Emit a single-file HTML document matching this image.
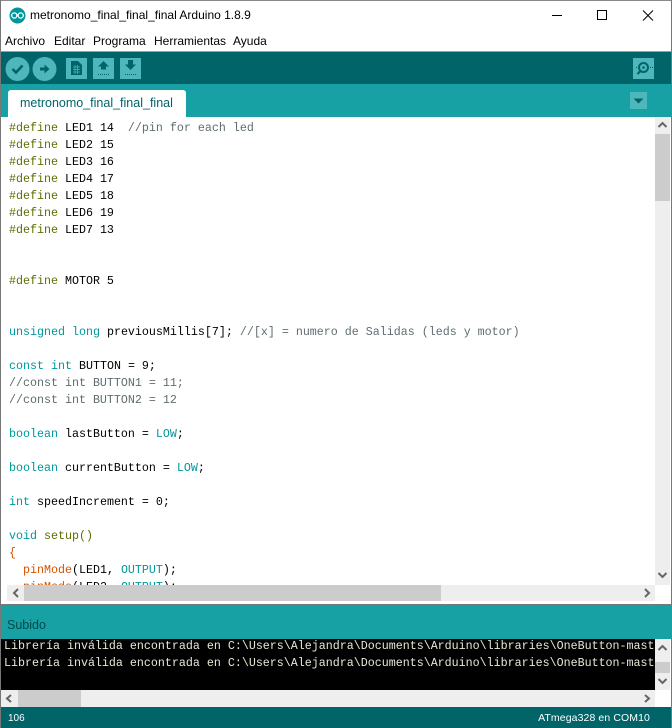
<!DOCTYPE html>
<html><head><meta charset="utf-8"><style>
html,body{margin:0;padding:0;background:#fff}
#w{position:relative;width:672px;height:728px;overflow:hidden;background:#fff;font-family:"Liberation Sans",sans-serif}
#w div,#w span.a,#w svg{position:absolute}
.m{top:34px;font-size:12px;line-height:14px;color:#000;white-space:nowrap}
pre{margin:0;font-family:"Liberation Mono",monospace;font-size:11.667px;line-height:17px;white-space:pre}
.d{color:#5e6d03}.c{color:#5f6d70}.k{color:#00979c}.f{color:#d35400}
.b{background:#4db7bb}
</style></head><body><div id="w">
<div style="left:0;top:0;width:672px;height:1px;background:#8a8a8a"></div>
<svg style="left:8.500px;top:6.500px" width="17" height="17" viewBox="0 0 17 17"><circle cx="8.500" cy="8.500" r="8" fill="#00979c"/><circle cx="5.300" cy="8.500" r="2.600" fill="none" stroke="#fff" stroke-width="1.300"/><circle cx="11.700" cy="8.500" r="2.600" fill="none" stroke="#fff" stroke-width="1.300"/></svg>
<div style="left:30px;top:8px;font-size:12px;line-height:15px;white-space:nowrap;color:#000">metronomo_final_final_final Arduino 1.8.9</div>
<svg style="left:550px;top:8px" width="112" height="16" viewBox="0 0 112 16" fill="none" stroke="#000"><path d="M2 7.500H12"/><rect x="47.500" y="2.500" width="9" height="9"/><path d="M93 2.500L103 12.500M103 2.500L93 12.500" /></svg>
<div class="m" style="left:5px">Archivo</div><div class="m" style="left:54px">Editar</div><div class="m" style="left:93px">Programa</div><div class="m" style="left:154px">Herramientas</div><div class="m" style="left:233px">Ayuda</div>
<div style="left:0;top:51px;width:672px;height:1px;background:#a0a0a0"></div>
<div style="left:0;top:52px;width:672px;height:32px;background:#006468"></div>
<div style="left:0;top:84px;width:672px;height:33px;background:#17a1a5"></div>
<svg style="left:0;top:52px" width="672" height="32" viewBox="0 0 672 32">
<circle cx="17.500" cy="17" r="12" fill="#4db7bb"/><path d="M12.500 17L16 20.500L22.500 13.500" fill="none" stroke="#006468" stroke-width="2.600"/>
<circle cx="44.500" cy="17" r="12" fill="#4db7bb"/><path d="M40 15.500H44.500V12.500L49.500 17L44.500 21.500V18.500H40Z" fill="#006468"/>
<rect x="66" y="6" width="21" height="21" fill="#4db7bb"/><path d="M71 9H78L82 13V23H71Z" fill="#006468"/><path d="M73 15h7M73 17.500h7M73 20h7M75 13v9M77.500 13v9" stroke="#4db7bb" stroke-width=".7"/>
<rect x="93" y="6" width="21" height="21" fill="#4db7bb"/><path d="M103.500 9L109 14.500H106V17.500H101V14.500H98Z" fill="#006468"/><path d="M98 22.500H109" stroke="#006468" stroke-dasharray="1 1"/>
<rect x="120" y="6" width="21" height="21" fill="#4db7bb"/><path d="M128 8H133V12.500H136L130.500 18L125 12.500H128Z" fill="#006468"/><path d="M125 22.500H136" stroke="#006468" stroke-dasharray="1 1"/>
<rect x="633" y="6" width="21" height="21" fill="#4db7bb"/><circle cx="643.500" cy="15.500" r="4.500" fill="none" stroke="#006468" stroke-width="2"/><circle cx="643.500" cy="15.500" r="1.300" fill="#006468"/><path d="M640.500 19L637.500 22" stroke="#006468" stroke-width="2.200"/><path d="M636 15.500h1M650 15.500h1M652 15.500h1" stroke="#006468"/>
</svg>
<div style="left:8px;top:90px;width:178px;height:27px;background:#fff;border-radius:3px 3px 0 0"></div>
<div style="left:20px;top:96px;font-size:12.500px;line-height:14px;color:#006468;white-space:nowrap">metronomo_final_final_final</div>
<svg style="left:630px;top:92px" width="17" height="17"><rect width="17" height="17" fill="#4db7bb"/><path d="M3.500 6.500H13.500L8.500 11.500Z" fill="#006468"/></svg>
<div style="left:0;top:117px;width:655px;height:468px;overflow:hidden;background:#fff"><pre style="position:absolute;left:9px;top:3px;color:#000"><span class="d">#define</span> LED1 14  <span class="c">//pin for each led</span>
<span class="d">#define</span> LED2 15
<span class="d">#define</span> LED3 16
<span class="d">#define</span> LED4 17
<span class="d">#define</span> LED5 18
<span class="d">#define</span> LED6 19
<span class="d">#define</span> LED7 13


<span class="d">#define</span> MOTOR 5


<span class="k">unsigned</span> <span class="k">long</span> previousMillis[7]; <span class="c">//[x] = numero de Salidas (leds y motor)</span>

<span class="k">const</span> <span class="k">int</span> BUTTON = 9;
<span class="c">//const int BUTTON1 = 11;</span>
<span class="c">//const int BUTTON2 = 12</span>

<span class="k">boolean</span> lastButton = <span class="k">LOW</span>;

<span class="k">boolean</span> currentButton = <span class="k">LOW</span>;

<span class="k">int</span> speedIncrement = 0;

<span class="k">void</span> <span class="d">setup()</span>
<span class="f">{</span>
  <span class="f">pinMode</span>(LED1, <span class="k">OUTPUT</span>);
  <span class="f">pinMode</span>(LED2, <span class="k">OUTPUT</span>);</pre></div>
<div style="left:655px;top:117px;width:15px;height:468px;background:#eee"></div>
<div style="left:655px;top:134px;width:15px;height:67px;background:#ccc"></div>
<div style="left:7px;top:585px;width:648px;height:16px;background:#eee"></div>
<div style="left:24px;top:585px;width:417px;height:16px;background:#ccc"></div>
<div style="left:0;top:604px;width:672px;height:1px;background:#777"></div>
<div style="left:0;top:605px;width:672px;height:34px;background:#17a1a5"></div>
<div style="left:7px;top:618px;font-size:12.500px;line-height:14px;color:#00484b">Subido</div>
<div style="left:0;top:639px;width:655px;height:51px;background:#000;overflow:hidden"><pre style="position:absolute;left:4px;top:-1px;color:#e8e8d8">Librería inválida encontrada en C:\Users\Alejandra\Documents\Arduino\libraries\OneButton-master
Librería inválida encontrada en C:\Users\Alejandra\Documents\Arduino\libraries\OneButton-master</pre></div>
<div style="left:655px;top:639px;width:15px;height:51px;background:#eee"></div>
<div style="left:655px;top:662px;width:15px;height:11px;background:#ccc"></div>
<div style="left:0;top:690px;width:655px;height:17px;background:#eee"></div>
<div style="left:655px;top:690px;width:17px;height:17px;background:#fff"></div>
<div style="left:18px;top:690px;width:63px;height:17px;background:#ccc"></div>
<svg style="left:0;top:0" width="672" height="728" fill="none" stroke="#666" stroke-width="2">
<path d="M658.500 127L662.500 123L666.500 127"/><path d="M658.500 573L662.500 577L666.500 573"/>
<path d="M18 589L14 593L18 597"/><path d="M645 589L649 593L645 597"/>
<path d="M658.500 650L662.500 646L666.500 650"/><path d="M658.500 679L662.500 683L666.500 679"/>
<path d="M11 695L7 698.500L11 702"/><path d="M645 695L649 698.500L645 702"/>
</svg>
<div style="left:0;top:707px;width:672px;height:21px;background:#006468"></div>
<div style="left:8px;top:712px;font-size:10px;line-height:13px;color:#fff">106</div>
<div style="right:22px;top:712px;font-size:10.500px;line-height:13px;color:#fff;letter-spacing:.1px;white-space:nowrap">ATmega328 en COM10</div>
<div style="left:0;top:0;width:1px;height:728px;background:#777"></div>
<div style="left:671px;top:0;width:1px;height:728px;background:#777"></div>
</div></body></html>
